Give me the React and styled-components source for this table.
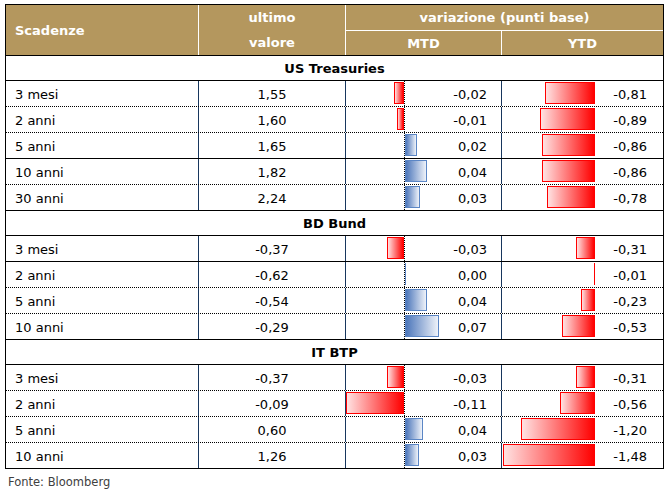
import React from 'react'
import styled, { createGlobalStyle } from 'styled-components'

const GlobalStyle = createGlobalStyle`
    body {
        margin: 0;
        background: #fff;
        color: #000;
        font-family: "DejaVu Sans", sans-serif;
    }
`

const sections = [
    {
        title: 'US Treasuries',
        rows: [
            { label: '3 mesi', value: '1,55', mtd: -0.02, mtdW: 10, ytd: -0.81, line: 'dotted' },
            { label: '2 anni', value: '1,60', mtd: -0.01, mtdW: 7, ytd: -0.89, line: 'dotted' },
            { label: '5 anni', value: '1,65', mtd: 0.02, mtdW: 12, ytd: -0.86, line: 'solid' },
            { label: '10 anni', value: '1,82', mtd: 0.04, mtdW: 22, ytd: -0.86, line: 'dotted' },
            { label: '30 anni', value: '2,24', mtd: 0.03, mtdW: 15, ytd: -0.78, line: 'solid' },
        ],
    },
    {
        title: 'BD Bund',
        rows: [
            { label: '3 mesi', value: '-0,37', mtd: -0.03, mtdW: 17, ytd: -0.31, line: 'solid' },
            { label: '2 anni', value: '-0,62', mtd: 0.0, mtdW: 1, ytd: -0.01, line: 'dotted' },
            { label: '5 anni', value: '-0,54', mtd: 0.04, mtdW: 22, ytd: -0.23, line: 'dotted' },
            { label: '10 anni', value: '-0,29', mtd: 0.07, mtdW: 34, ytd: -0.53, line: 'solid' },
        ],
    },
    {
        title: 'IT BTP',
        rows: [
            { label: '3 mesi', value: '-0,37', mtd: -0.03, mtdW: 17, ytd: -0.31, line: 'dotted' },
            { label: '2 anni', value: '-0,09', mtd: -0.11, mtdW: 58, ytd: -0.56, line: 'dotted' },
            { label: '5 anni', value: '0,60', mtd: 0.04, mtdW: 18, ytd: -1.2, line: 'dotted' },
            { label: '10 anni', value: '1,26', mtd: 0.03, mtdW: 14, ytd: -1.48, line: 'none' },
        ],
    },
]

// formats 0.04 -> "0,04", -1.2 -> "-1,20"
const fmt = (v) => v.toFixed(2).replace('.', ',').replace('-0,00', '0,00')

const Bar = ({ width, positive }) => (
    <BarStyled
        $positive={positive}
        $thin={width < 2}
        style={{ width: `${Math.max(width, 1)}px` }}
    />
)

const App = () => {
    return (
        <Page>
            <GlobalStyle />
            <Table>
                <Head>
                    <HeadCell $span="row" $align="left">Scadenze</HeadCell>
                    <HeadCell $span="row" $stack>
                        <span>ultimo</span>
                        <span>valore</span>
                    </HeadCell>
                    <HeadCell $span="col">variazione (punti base)</HeadCell>
                    <HeadCell>MTD</HeadCell>
                    <HeadCell>YTD</HeadCell>
                </Head>

                {sections.map((section) => (
                    <React.Fragment key={section.title}>
                        <SectionRow>{section.title}</SectionRow>
                        {section.rows.map((row) => (
                            <Row key={section.title + row.label} $line={row.line}>
                                <Label>{row.label}</Label>
                                <Value>{row.value}</Value>
                                <MtdCell>
                                    <NegArea>
                                        {row.mtd < 0 && <Bar width={row.mtdW} />}
                                    </NegArea>
                                    <PosArea>
                                        <div>
                                            {row.mtd >= 0 && <Bar width={row.mtdW} positive />}
                                        </div>
                                        <Num>{fmt(row.mtd)}</Num>
                                    </PosArea>
                                </MtdCell>
                                <YtdCell>
                                    <NegArea>
                                        <Bar width={Math.round(Math.abs(row.ytd) * 62)} />
                                    </NegArea>
                                    <YtdNum>{fmt(row.ytd)}</YtdNum>
                                </YtdCell>
                            </Row>
                        ))}
                    </React.Fragment>
                ))}
            </Table>
            <Source>Fonte: Bloomberg</Source>
        </Page>
    )
}

const Page = styled.div`
    padding: 4px 0 0 5px;
`

const Table = styled.div`
    width: 659px;
    box-sizing: border-box;
    border: 1px solid #000;
    font-size: 13px;
`

const Head = styled.div`
    display: grid;
    grid-template-columns: 192px 146px 155px 161px;
    grid-template-rows: 25px 24px;
    gap: 1px;
    background: #fff;
    border-bottom: 1px solid #000;
`

const HeadCell = styled.div`
    background: #b4975e;
    color: #fff;
    font-weight: bold;
    display: flex;
    align-items: center;
    justify-content: ${(p) => (p.$align === 'left' ? 'flex-start' : 'center')};
    padding-left: ${(p) => (p.$align === 'left' ? '9px' : '0')};
    grid-row: ${(p) => (p.$span === 'row' ? 'span 2' : 'auto')};
    grid-column: ${(p) => (p.$span === 'col' ? 'span 2' : 'auto')};

    ${(p) => p.$stack && `
        display: grid;
        grid-template-rows: 25px 25px;
        justify-items: center;
        align-items: center;
    `}
`

const SectionRow = styled.div`
    height: 25px;
    box-sizing: border-box;
    border-bottom: 1px solid #000;
    display: flex;
    align-items: center;
    justify-content: center;
    font-weight: bold;
    padding-top: 1px;
`

const Row = styled.div`
    display: grid;
    grid-template-columns: 192px 147px 156px 162px;
    box-sizing: border-box;
    border-bottom: ${(p) => (p.$line === 'none' ? '0' : `1px ${p.$line} #000`)};
    height: ${(p) => (p.$line === 'none' ? '25px' : '26px')};
`

const Label = styled.div`
    display: flex;
    align-items: center;
    padding: 2px 0 0 9px;
`

const Value = styled.div`
    border-left: 1px solid #17365d;
    display: flex;
    align-items: center;
    justify-content: center;
    padding-top: 2px;
`

const MtdCell = styled.div`
    border-left: 1px solid #17365d;
    display: grid;
    grid-template-columns: 58px 1fr;
`

const YtdCell = styled.div`
    border-left: 1px solid #17365d;
    display: grid;
    grid-template-columns: 93px 1fr;
`

const NegArea = styled.div`
    display: flex;
    justify-content: flex-end;
    align-items: flex-start;
`

const PosArea = styled.div`
    border-left: 1px dotted #000;
    display: flex;
    justify-content: space-between;
    align-items: flex-start;
    padding-right: 14px;
`

const Num = styled.span`
    align-self: center;
    padding-top: 2px;
`

const YtdNum = styled.span`
    align-self: center;
    text-align: right;
    padding: 2px 16px 0 0;
`

const BarStyled = styled.div`
    height: 22px;
    margin-top: 1px;
    box-sizing: border-box;
    border: 1px solid ${(p) => (p.$positive ? '#5b86c5' : '#ff0000')};
    background: ${(p) =>
        p.$positive
            ? 'linear-gradient(to right, #4d77bb, #eef2f9)'
            : 'linear-gradient(to right, #ffe2e2, #ff0000)'};

    ${(p) => p.$thin && `
        border: 0;
        background: ${p.$positive ? '#5b86c5' : '#ff0000'};
    `}
`

const Source = styled.div`
    font-size: 11.5px;
    color: #404040;
    padding: 6px 0 0 3px;
`

export default App
